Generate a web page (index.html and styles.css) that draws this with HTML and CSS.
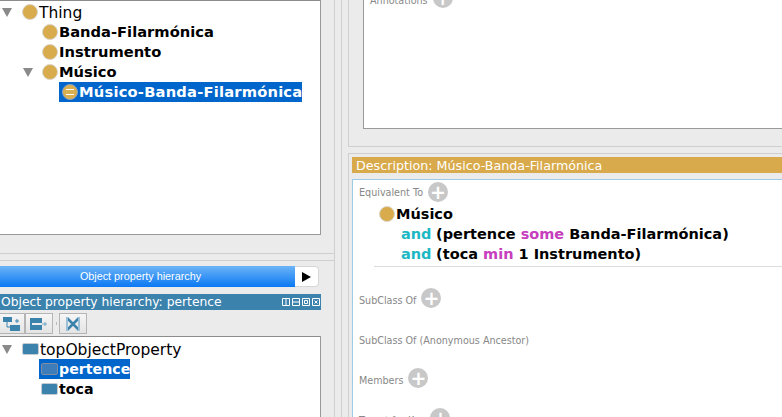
FILE: index.html
```html
<!DOCTYPE html>
<html>
<head>
    <title>Protege</title>
    <link rel="stylesheet" href="styles.css">
</head>
<body>
    <svg class="defs" width="0" height="0">
        <symbol id="down" viewBox="0 0 10 9"><path d="M0 0H10L5 9Z" fill="#8a8a8a"/></symbol>
    </svg>
    <div class="left">
        <div class="upper">
            <div class="tree class-tree">
                <div class="row top"><svg class="arrow"><use href="#down"/></svg><span class="cls"></span><span class="root-name">Thing</span></div>
                <div class="row lvl1"><span class="cls"></span><b>Banda-Filarmónica</b></div>
                <div class="row lvl1"><span class="cls"></span><b>Instrumento</b></div>
                <div class="row lvl1b"><svg class="arrow"><use href="#down"/></svg><span class="cls"></span><b>Músico</b></div>
                <div class="row sel sel-class"><span class="cls eq"><i></i></span><b>Músico-Banda-Filarmónica</b></div>
            </div>
        </div>
        <div class="lower">
            <div class="tabbar">
                <div class="tab">Object property hierarchy</div>
                <div class="tab-more"><svg width="11" height="12" viewBox="0 0 11 12"><path d="M1 1L10 6L1 11Z" fill="#000"/></svg></div>
            </div>
            <div class="view-head prop-head">
                <span>Object property hierarchy: pertence</span>
                <div class="view-btns">
                    <svg width="8" height="8" viewBox="0 0 8 8"><path d="M.5.5H7.500V7.500H.5ZM4 .5V7.500" class="wbtn"/></svg>
                    <svg width="8" height="8" viewBox="0 0 8 8"><path d="M.5.5H7.500V7.500H.5ZM.5 4H7.500" class="wbtn"/></svg>
                    <svg width="8" height="8" viewBox="0 0 8 8"><path d="M.5.5H7.500V7.500H.5ZM2.500 2.500H5.500V5.500H2.500Z" class="wbtn"/></svg>
                    <svg width="8" height="8" viewBox="0 0 8 8"><path d="M.5.5H7.500V7.500H.5ZM2.500 2.500L5.500 5.500M5.500 2.500L2.500 5.500" class="wbtn"/></svg>
                </div>
            </div>
            <div class="toolbar">
                <div class="tool first">
                    <svg width="18" height="16" viewBox="0 0 18 16"><path d="M4 5V11H8" fill="none" stroke="#3b82ad"/><rect x="0" y="1" width="9" height="5" fill="#3b82ad"/><rect x="7" y="9" width="10" height="6" fill="#3b82ad"/><path d="M12 5H16M14 3V7" stroke="#3b82ad"/></svg>
                </div>
                <div class="tool">
                    <svg width="18" height="16" viewBox="0 0 18 16"><rect x="1" y="2" width="11" height="5" fill="#3b82ad"/><rect x="1" y="9" width="11" height="5" fill="#3b82ad"/><path d="M1 2V14" stroke="#3b82ad" stroke-width="2"/><path d="M12 8H17M15 6V10" stroke="#6fa5c6"/></svg>
                </div>
                <span class="tool-sep"></span>
                <div class="tool">
                    <svg width="16" height="16" viewBox="0 0 16 16"><path d="M2 2L14 14M14 2L2 14" stroke="#3b82ad" stroke-width="2.500"/><path d="M2 1V15M14 1V15" stroke="#9cc0d6" stroke-width="2"/></svg>
                </div>
            </div>
            <div class="tree prop-tree">
                <div class="row top"><svg class="arrow"><use href="#down"/></svg><span class="prop"></span><span class="root-name">topObjectProperty</span></div>
                <div class="row sel sel-prop"><span class="prop"></span><b>pertence</b></div>
                <div class="row prop-row"><span class="prop"></span><b>toca</b></div>
            </div>
        </div>
    </div>
    <div class="right">
        <div class="frame annot-frame">
            <div class="annot-panel">
                <div class="label-row annot-row"><span>Annotations</span><span class="plus"></span></div>
            </div>
        </div>
        <div class="frame desc-frame">
            <div class="view-head desc-head"><span>Description: Músico-Banda-Filarmónica</span></div>
            <div class="desc-panel">
                <div class="label-row equiv-row"><span>Equivalent To</span><span class="plus"></span></div>
                <div class="axiom">
                    <div class="axiom-head"><span class="cls"></span><b>Músico</b></div>
                    <div class="axiom-line"><b class="kw-and">and</b> <b>(pertence <span class="kw-res">some</span> Banda-Filarmónica)</b></div>
                    <div class="axiom-line"><b class="kw-and">and</b> <b>(toca <span class="kw-res">min</span> 1 Instrumento)</b></div>
                </div>
                <div class="label-row sub-row"><span>SubClass Of</span><span class="plus"></span></div>
                <div class="label-row"><span>SubClass Of (Anonymous Ancestor)</span></div>
                <div class="label-row"><span>Members</span><span class="plus"></span></div>
                <div class="label-row"><span>Target for Key</span><span class="plus"></span></div>
            </div>
        </div>
    </div>
</body>
</html>
```

FILE: styles.css
```css
html, body { height: 100%; }
body { margin: 0; width: 782px; height: 417px; overflow: hidden; display: flex; background: #ebebeb; font-family: "DejaVu Sans", sans-serif; color: #000; }
.defs { position: absolute; }

.left { width: 334px; flex: none; height: 417px; border-right: 1px solid #cfcfcf; }
.upper { height: 253px; border-bottom: 1px solid #cfcfcf; }
.tree { background: #fff; font-size: 15.5px; }
.tree b { font-size: 14.7px; margin-top: -1px; }
.root-name { margin-top: 1px; }
.class-tree { width: 320px; border-top: 1px solid #8c8c8c; border-right: 1px solid #999; border-bottom: 1px solid #999; padding-top: 1px; height: 232px; }

.row { display: flex; align-items: center; height: 20px; white-space: nowrap; }
.arrow { width: 10px; height: 9px; flex: none; }
.top { padding-left: 2px; }
.top .arrow { margin-right: 10px; }
.lvl1 { padding-left: 42px; }
.lvl1b { padding-left: 23px; }
.lvl1b .arrow { margin-right: 9px; }
.sel { background: #0066cc; color: #fff; width: fit-content; }
.sel-class { margin-left: 59px; padding-left: 3px; }
.sel-class b { letter-spacing: 0.2px; }
.sel-prop { margin-left: 39px; padding-left: 2px; }
.prop-row { padding-left: 41px; }
.prop-tree b { font-size: 14.2px; }

.cls { width: 14px; height: 14px; flex: none; margin-right: 1px; border-radius: 50%; background: #d8ab4c; border: 1px solid #d9d5cb; display: flex; align-items: center; justify-content: center; }
.eq i { display: block; width: 8px; height: 4px; border-top: 1px solid #fff; border-bottom: 1px solid #fff; }
.sel .cls { background: #d8b052; border-color: #8fa0c0; }
.prop { width: 15px; height: 10px; flex: none; margin-right: 1px; border-radius: 2px; background: #3b82ad; border: 1px solid #c4ccd2; }
.sel .prop { border-color: #7d8ea3; background: #3f7dba; }

.lower { margin-top: 6px; border-top: 1px solid #cfcfcf; padding-top: 5px; }
.tabbar { display: flex; height: 21px; width: 319px; }
.tab { width: 295px; box-sizing: border-box; padding-right: 14px; background: linear-gradient(#6cb4f6, #0b78f4); color: #fff; line-height: 21px; text-align: center; font-family: "Liberation Sans", sans-serif; font-size: 10.8px; }
.tab-more { flex: 1; background: #fff; border-radius: 0 4px 4px 0; border: 1px solid #d6d6d6; border-left: 0; display: flex; align-items: center; justify-content: center; }

.view-head { color: #fff; display: flex; align-items: center; justify-content: space-between; height: 16px; white-space: nowrap; }
.prop-head { margin-top: 7px; width: 321px; background: #3b82ad; padding-left: 1px; box-sizing: border-box; font-size: 12.3px; }
.view-btns { display: flex; gap: 2px; padding-right: 1px; }
.wbtn { fill: none; stroke: #fff; }

.toolbar { display: flex; align-items: center; height: 21px; margin-top: 3px; }
.tool { width: 26px; height: 19px; border: 1px solid #b5b5b5; background: linear-gradient(#f6f6f6, #e4e4e4); display: flex; align-items: center; justify-content: center; }
.tool.first { width: 24px; border-left: 0; }
.tool-sep { width: 1px; height: 3px; background: #bbb; margin: 0 2px 0 3px; }

.prop-tree { width: 320px; height: 78px; border-top: 1px solid #8c8c8c; border-right: 1px solid #999; margin-top: 2px; padding-top: 2px; }

.right { flex: 1; margin-left: 6px; padding-left: 6px; border-left: 1px solid #cfcfcf; min-width: 0; height: 417px; overflow: hidden; }
.frame { border: 1px solid #cfcfcf; border-right: 0; }
.annot-frame { border-top: 0; height: 146px; padding-left: 14px; }
.annot-panel { height: 128px; background: #fff; border-left: 1px solid #999; border-bottom: 1px solid #999; overflow: hidden; padding-left: 6px; }
.desc-frame { margin-top: 6px; padding: 3px 0 0 3px; height: 263px; overflow: hidden; }
.desc-head { background: #d8aa4b; font-size: 12.7px; padding-left: 4px; }
.desc-panel { margin-top: 6px; height: 260px; background: #fff; border: 1px solid #9ccbe8; border-right: 0; padding-left: 6px; }

.label-row { display: flex; align-items: center; height: 40px; font-size: 9.6px; color: #888; white-space: nowrap; }
.label-row .plus { margin-left: 5px; position: relative; top: -2px; }
.annot-row { margin-top: -20px; }
.equiv-row { height: 24px; }
.equiv-row .plus { top: 0; }
.sub-row { margin-top: 13px; }
.plus { width: 20px; height: 20px; flex: none; border-radius: 50%; background: #c8c8c8; display: flex; align-items: center; justify-content: center; }
.plus::before { content: "+"; color: #fff; font: bold 19px/20px "DejaVu Sans", sans-serif; }

.axiom { margin-left: 15px; border-bottom: 1px solid #dcdcdc; font-size: 14.5px; padding-bottom: 2px; }
.axiom-head { display: flex; align-items: center; height: 20px; margin-left: 5px; }
.axiom-line { height: 20px; line-height: 20px; margin-left: 27px; white-space: nowrap; }
.kw-and { color: #1db8c4; }
.kw-res { color: #c63dbd; }
```
